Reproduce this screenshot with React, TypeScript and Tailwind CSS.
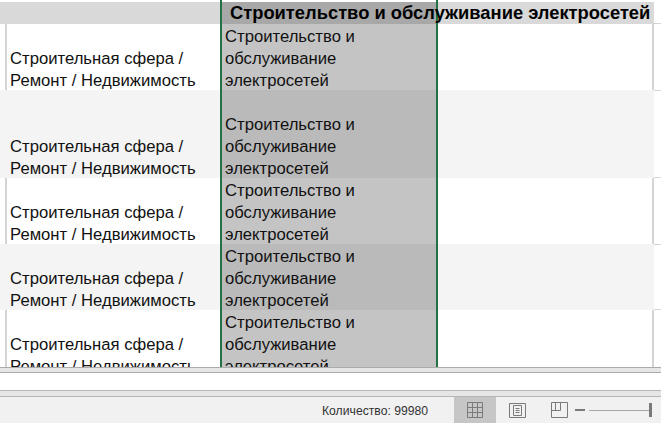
const rows = [
  { h: 'h-[66px]', grey: false, mid: 'bg-[#c4c4c4]' },
  { h: 'h-[88px]', grey: true, mid: 'bg-[#bababa]' },
  { h: 'h-[66px]', grey: false, mid: 'bg-[#c4c4c4]' },
  { h: 'h-[66px]', grey: true, mid: 'bg-[#bababa]' },
  { h: 'h-[66px]', grey: false, mid: 'bg-[#c4c4c4]' },
]

function GridIcon() {
  return (
    <svg width="16" height="16" viewBox="0 0 16 16" fill="none" stroke="#7a7a7a">
      <path d="M.5.5h15v15H.5zM5.5.5v15M10.5.5v15M.5 5.5h15M.5 10.5h15" />
    </svg>
  )
}

function PageIcon() {
  return (
    <svg width="17" height="15" viewBox="0 0 17 15" fill="none" stroke="#7a7a7a">
      <path d="M.5.5h16v14H.5zM4.5 2.5h8v10h-8zM6.5 5.5h4M6.5 7.5h4M6.5 9.5h4" />
    </svg>
  )
}

function BreakIcon() {
  return (
    <svg width="17" height="16" viewBox="0 0 17 16" fill="none" stroke="#7a7a7a">
      <path d="M.5.5h16v15H.5zM.5 8.5h9V.5M4.5.5v8" />
    </svg>
  )
}

export default function App() {
  return (
    <div className="w-[661px] h-[423px] overflow-hidden flex flex-col bg-white font-['Liberation_Sans',Arial,sans-serif] text-[#111]">
      {/* sheet */}
      <div className="h-[367px] overflow-hidden">
        <div className="h-[2px] flex">
          <div className="w-[220px] overflow-hidden pl-[100px]">
            <span className="block text-[16px] leading-[2px] text-[#1f3864] -mt-[9px]">д</span>
          </div>
          <div className="w-[2px] bg-[#217346]" />
          <div className="w-[214px]" />
          <div className="w-[2px] bg-[#217346]" />
        </div>
        <div className="h-[22px] flex">
          <div className="w-[220px] shrink-0 bg-[#d9d9d9]" />
          <div className="w-[2px] shrink-0 bg-[#217346]" />
          <div className="w-[214px] shrink-0 bg-[#a8a8a8] relative">
            <span className="absolute z-10 left-[8px] top-0 whitespace-nowrap text-[18.33px] leading-[22px] font-bold text-black">
              Строительство и обслуживание электросетей
            </span>
          </div>
          <div className="w-[2px] shrink-0 bg-[#217346]" />
          <div className="flex-1 bg-[#d9d9d9]" />
          <div className="w-[7px] shrink-0 bg-white border-b border-[#d4d4d4]" />
        </div>
        {rows.map((r, i) => (
          <div key={i} className={`flex ${r.h}`}>
            <div className={`w-[220px] shrink-0 flex ${r.grey ? 'bg-[#f4f4f4]' : 'bg-white'}`}>
              <div className={`w-[7px] shrink-0 ml-[5px] ${r.grey ? '' : 'border-l-2 border-[#d4d4d4]'}`} />
              <div className="flex-1 -ml-[2px] flex flex-col justify-end text-[16.67px] leading-[22px] translate-y-[2px]">
                <div className="whitespace-nowrap">Строительная сфера /</div>
                <div className="whitespace-nowrap">Ремонт / Недвижимость</div>
              </div>
            </div>
            <div className="w-[2px] shrink-0 bg-[#217346]" />
            <div className={`w-[214px] shrink-0 ${r.mid} pl-[3px] flex flex-col justify-end text-[16.67px] leading-[22px]`}>
              <div className="translate-y-[2px]">Строительство и</div>
              <div className="translate-y-[2px]">обслуживание</div>
              <div className="translate-y-[2px]">электросетей</div>
            </div>
            <div className="w-[2px] shrink-0 bg-[#217346]" />
            <div className={`flex-1 ${r.grey ? 'bg-[#f4f4f4]' : 'bg-white border-r-2 border-[#d4d4d4]'}`} />
            <div className={`w-[7px] shrink-0 bg-white ${r.grey ? 'border-t border-b border-[#d4d4d4]' : ''}`} />
          </div>
        ))}
      </div>
      {/* tab strip */}
      <div className="h-[6px] bg-[#e6e6e6] border-t border-b border-[#ababab]" />
      <div className="h-[17px] bg-white" />
      <div className="h-[7px] bg-[#e6e6e6] border-t border-b border-[#b5b5b5]" />
      {/* status bar */}
      <div className="flex-1 bg-[#f1f1f1] flex items-end overflow-hidden relative">
        <span className="absolute left-[322px] top-[6px] text-[12.2px] leading-[17px] text-[#333]">
          Количество: 99980
        </span>
        <div className="ml-[454px] flex h-[26px]">
          <div className="w-[42px] bg-[#c6c6c6] flex items-center justify-center">
            <GridIcon />
          </div>
          <div className="w-[42px] flex items-center justify-center">
            <PageIcon />
          </div>
          <div className="w-[42px] flex items-center justify-center">
            <BreakIcon />
          </div>
          <div className="flex items-center">
            <div className="w-[10px] h-[2px] bg-[#7a7a7a] -ml-[5px]" />
            <div className="w-[60px] h-[1px] bg-[#a6a6a6] ml-[4px]" />
            <div className="w-[3px] h-[14px] bg-[#7a7a7a]" />
          </div>
        </div>
      </div>
    </div>
  )
}
